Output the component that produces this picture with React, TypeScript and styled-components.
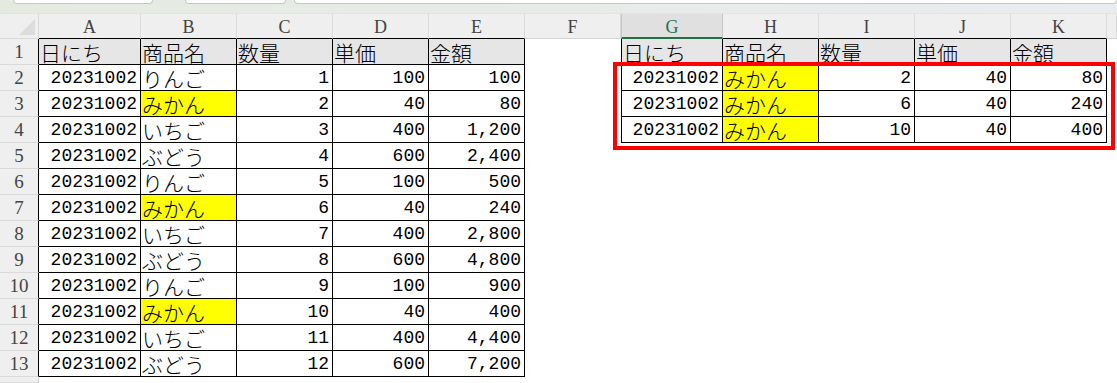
import React from 'react'
import styled, { createGlobalStyle, css } from 'styled-components'

const Global = createGlobalStyle`
  html, body {
    margin: 0;
    padding: 0;
    background: #fff;
  }
`

const Page = styled.div`
  width: 1117px;
  height: 383px;
  overflow: hidden;
  display: flex;
  flex-direction: column;
  background: #fff;
`

const Strip = styled.div`
  flex: none;
  height: 14px;
  box-sizing: border-box;
  display: flex;
  align-items: flex-start;
  padding-left: 13px;
  background: linear-gradient(90deg, #e5eae1, #e9ecef);
  border-bottom: 1px solid #e2e4e2;
`

const Tab = styled.div<{ $w?: number; $gap?: number }>`
  height: 3px;
  width: ${(p) => (p.$w ? `${p.$w}px` : 'auto')};
  flex: ${(p) => (p.$w ? 'none' : '1')};
  margin-left: ${(p) => p.$gap ?? 0}px;
  background: #fff;
  border: 1px solid #c8c8c8;
  border-top: none;
  border-radius: 0 0 5px 5px;
`

const Sheet = styled.div`
  position: relative;
  flex: 1;
  display: grid;
  grid-template-columns: 39px 102px repeat(5, 96px) 102px repeat(4, 96px) 1fr;
  grid-template-rows: 25px repeat(13, 26px) 1fr;
`

const Corner = styled.div`
  position: relative;
  background: #efefef;
  border-right: 1px solid #d9d9d9;
  border-bottom: 1px solid #d9d9d9;
  &::after {
    content: '';
    position: absolute;
    right: 3px;
    bottom: 3px;
    border-style: solid;
    border-width: 0 0 16px 16px;
    border-color: transparent transparent #dcdcdc transparent;
  }
`

const ColHead = styled.div<{ $edge?: boolean; $active?: boolean }>`
  box-sizing: border-box;
  display: flex;
  align-items: center;
  justify-content: center;
  padding-top: 2px;
  background: #efefef;
  border-right: 1px solid #dadada;
  border-bottom: 1px solid ${(p) => (p.$edge ? '#000' : '#d4d4d4')};
  font-family: 'Liberation Serif', serif;
  font-size: 18px;
  line-height: 20px;
  color: #444;
  ${(p) =>
    p.$active &&
    css`
      background: #e0e0e0;
      border-left: 1px solid #c6c6c6;
      border-right: 1px solid #c6c6c6;
      border-bottom: 2px solid #217346;
      color: #217346;
    `}
`

const RowHead = styled.div<{ $edge?: boolean }>`
  box-sizing: border-box;
  display: flex;
  align-items: center;
  justify-content: center;
  padding-top: 1px;
  background: #efefef;
  border-right: 1px solid ${(p) => (p.$edge ? '#000' : '#d4d4d4')};
  border-bottom: 1px solid #dadada;
  font-family: 'Liberation Serif', serif;
  font-size: 19px;
  line-height: 22px;
  color: #444;
`

const Cell = styled.div<{
  $boxed?: boolean
  $first?: boolean
  $num?: boolean
  $head?: boolean
  $fill?: boolean
}>`
  box-sizing: border-box;
  display: flex;
  align-items: flex-end;
  justify-content: ${(p) => (p.$num ? 'flex-end' : 'flex-start')};
  padding: ${(p) => (p.$num ? '0 3px 2px 0' : '0 0 0 1px')};
  overflow: hidden;
  white-space: nowrap;
  color: #000;
  font-family: ${(p) =>
    p.$num ? "'Liberation Mono', monospace" : "'Noto Sans CJK JP', sans-serif"};
  font-size: ${(p) => (p.$num ? '18px' : '21px')};
  line-height: ${(p) => (p.$num ? '20px' : '24px')};
  font-weight: ${(p) => (p.$num ? 400 : 300)};
  background: ${(p) => (p.$fill ? '#ffff00' : p.$head ? '#e7e6e6' : '#fff')};
  ${(p) =>
    p.$boxed &&
    css`
      border-right: 1px solid #000;
      border-bottom: 1px solid #000;
    `}
  ${(p) =>
    p.$first &&
    css`
      border-left: 1px solid #000;
    `}
`

const Highlight = styled.div`
  position: absolute;
  left: 613px;
  top: 48px;
  width: 502px;
  height: 88px;
  box-sizing: border-box;
  border: 4px solid #ff0000;
  pointer-events: none;
`

type Row = [string, string, string, string, string]

const head: Row = ['日にち', '商品名', '数量', '単価', '金額']

const data: Row[] = [
  ['20231002', 'りんご', '1', '100', '100'],
  ['20231002', 'みかん', '2', '40', '80'],
  ['20231002', 'いちご', '3', '400', '1,200'],
  ['20231002', 'ぶどう', '4', '600', '2,400'],
  ['20231002', 'りんご', '5', '100', '500'],
  ['20231002', 'みかん', '6', '40', '240'],
  ['20231002', 'いちご', '7', '400', '2,800'],
  ['20231002', 'ぶどう', '8', '600', '4,800'],
  ['20231002', 'りんご', '9', '100', '900'],
  ['20231002', 'みかん', '10', '40', '400'],
  ['20231002', 'いちご', '11', '400', '4,400'],
  ['20231002', 'ぶどう', '12', '600', '7,200'],
]

const picked = data.filter((r) => r[1] === 'みかん')

const letters = ['A', 'B', 'C', 'D', 'E', 'F', 'G', 'H', 'I', 'J', 'K']

const TableCells = ({ row, isHead, first }: { row: Row; isHead: boolean; first?: boolean }) => (
  <>
    {row.map((v, i) => (
      <Cell
        key={i}
        $boxed
        $first={first && i === 0}
        $head={isHead}
        $num={!isHead && i !== 1}
        $fill={!isHead && v === 'みかん'}
      >
        {v}
      </Cell>
    ))}
  </>
)

const Blank = ({ n }: { n: number }) => (
  <>
    {Array.from({ length: n }, (_, i) => (
      <Cell key={i} />
    ))}
  </>
)

export default function App() {
  const rows: Row[] = [head, ...data]
  return (
    <Page>
      <Global />
      <Strip>
        <Tab $w={138} />
        <Tab $w={99} $gap={32} />
        <Tab $gap={8} />
      </Strip>
      <Sheet>
        <Corner />
        {letters.map((l) => (
          <ColHead key={l} $edge={l !== 'F'} $active={l === 'G'}>
            {l}
          </ColHead>
        ))}
        <ColHead />
        {rows.map((row, r) => {
          const right = r === 0 ? head : picked[r - 1]
          return (
            <React.Fragment key={r}>
              <RowHead $edge>{r + 1}</RowHead>
              <TableCells row={row} isHead={r === 0} />
              <Cell />
              {right ? <TableCells row={right} isHead={r === 0} first /> : <Blank n={5} />}
              <Cell />
            </React.Fragment>
          )
        })}
        <RowHead />
        <Blank n={12} />
        <Highlight />
      </Sheet>
    </Page>
  )
}
